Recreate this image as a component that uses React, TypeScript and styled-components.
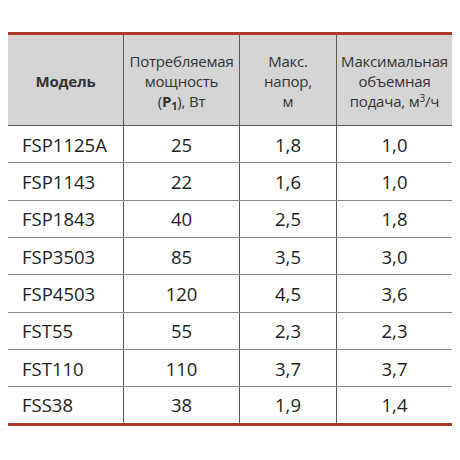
import styled, { createGlobalStyle } from 'styled-components';

const GlobalStyle = createGlobalStyle`
  body {
    margin: 0;
    background: #ffffff;
    font-family: "Open Sans", "Noto Sans", sans-serif;
  }
`

const Page = styled.div`
  padding: 32px 8px 0 8px;
`

const Table = styled.div`
  width: 444px;
  border-top: 3px solid #ae3a2e;
  border-bottom: 3px solid #ae3a2e;
`

const Row = styled.div<{ $head?: boolean; $last?: boolean }>`
  display: grid;
  grid-template-columns: 115px 116px 97px 116px;
  height: ${p => (p.$head ? '90px' : p.$last ? '35.33px' : '36.33px')};
  background: ${p => (p.$head ? '#d5d5d5' : '#ffffff')};
  border-bottom: ${p => (p.$last ? 'none' : p.$head ? '1px solid #5d5654' : '1px solid #8f8886')};
`

const Cell = styled.div<{ $left?: boolean }>`
  display: flex;
  align-items: center;
  justify-content: ${p => (p.$left ? 'flex-start' : 'center')};
  padding-left: ${p => (p.$left ? '14px' : '0')};
  border-left: ${p => (p.$left ? 'none' : '1px solid #5d5654')};
  font-size: 18.5px;
  color: #231f20;
`

const HeadCell = styled(Cell)`
  font-size: 15px;
  line-height: 20px;
  color: #333333;
  text-align: center;
  justify-content: center;
  padding-left: 0;
  padding-top: 2px;
  letter-spacing: -0.2px;
`

const Bold = styled.span`
  font-weight: 700;
`

const Sub = styled.sub`
  font-size: 11px;
  font-weight: 700;
  vertical-align: -3px;
  line-height: 0;
`

const Sup = styled.sup`
  font-size: 10px;
  vertical-align: 5px;
  line-height: 0;
`

const rows = [
  ['FSP1125A', '25', '1,8', '1,0'],
  ['FSP1143', '22', '1,6', '1,0'],
  ['FSP1843', '40', '2,5', '1,8'],
  ['FSP3503', '85', '3,5', '3,0'],
  ['FSP4503', '120', '4,5', '3,6'],
  ['FST55', '55', '2,3', '2,3'],
  ['FST110', '110', '3,7', '3,7'],
  ['FSS38', '38', '1,9', '1,4'],
]

const App = () => {
  return (
    <Page>
      <GlobalStyle />
      <Table>
        <Row $head>
          <HeadCell $left>
            <Bold>Модель</Bold>
          </HeadCell>
          <HeadCell>
            <div>
              Потребляемая<br />мощность<br />(<Bold>P<Sub>1</Sub></Bold>), Вт
            </div>
          </HeadCell>
          <HeadCell>
            <div>
              Макс.<br />напор,<br />м
            </div>
          </HeadCell>
          <HeadCell>
            <div>
              Максимальная<br />объемная<br />подача, м<Sup>3</Sup>/ч
            </div>
          </HeadCell>
        </Row>
        {rows.map((r, i) => (
          <Row key={r[0]} $last={i === rows.length - 1}>
            <Cell $left>{r[0]}</Cell>
            <Cell>{r[1]}</Cell>
            <Cell>{r[2]}</Cell>
            <Cell>{r[3]}</Cell>
          </Row>
        ))}
      </Table>
    </Page>
  )
}

export default App
